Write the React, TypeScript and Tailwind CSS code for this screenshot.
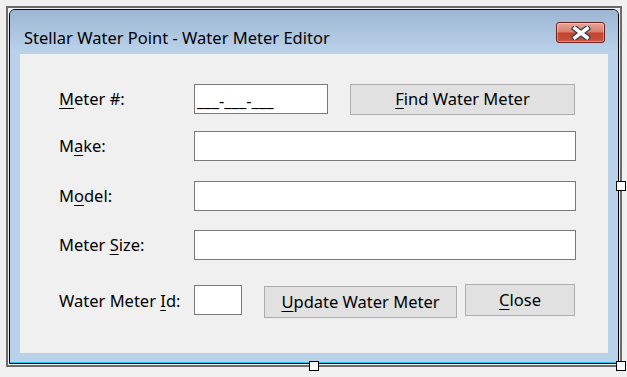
import type { ReactNode } from "react";

const font = { fontFamily: '"Segoe UI", "Noto Sans", sans-serif' };

function Key({ children }: { children: ReactNode }) {
  return <span className="underline underline-offset-[3px] decoration-1">{children}</span>;
}

function Label({ children }: { children: ReactNode }) {
  return <div className="w-[135px] shrink-0 text-[16.5px] leading-[22px] text-black">{children}</div>;
}

function Box({ className }: { className: string }) {
  return <div className={"h-[30px] bg-white border border-[#7a7a7a] " + className} />;
}

function Button({ children, className }: { children: ReactNode; className: string }) {
  return (
    <button className={"flex items-center justify-center bg-[#e1e1e1] border border-[#adadad] text-[16.5px] text-black " + className}>
      {children}
    </button>
  );
}

function Handle({ className }: { className: string }) {
  return <div className={"absolute w-[10px] h-[10px] bg-white border border-black " + className} />;
}

function CloseGlyph() {
  return (
    <svg width="20" height="14" viewBox="0 0 20 14">
      <path d="M4 2.5 L16 11.5 M16 2.5 L4 11.5" stroke="#3c3f52" strokeWidth="6" strokeLinecap="square" />
      <path d="M4 2.5 L16 11.5 M16 2.5 L4 11.5" stroke="#ffffff" strokeWidth="3.6" strokeLinecap="square" />
    </svg>
  );
}

export default function App() {
  return (
    <div className="relative w-[627px] h-[377px] bg-[#f0f0f0] pt-[6px] pl-[6px]" style={font}>
      {/* designer selection frame */}
      <div className="w-[616px] h-[361px] border-2 border-[#6b6b6b] p-[1px]">
        <div className="w-full h-full border border-black rounded-t-[6px] overflow-hidden flex flex-col bg-[#bad1ea]">
          {/* title bar */}
          <div className="h-[44px] shrink-0 flex justify-between px-[13px] bg-gradient-to-b from-[#9cb6d4] to-[#bcd3eb]">
            <span className="mt-[17px] ml-[1px] text-[16.5px] leading-[22px] text-black">
              Stellar Water Point - Water Meter Editor
            </span>
            <div className="mt-[12px] w-[49px] h-[21px] rounded-[3px] border border-[#6e2220] flex items-center justify-center bg-[linear-gradient(to_bottom,#eaa596_0%,#d8806e_48%,#c3432d_52%,#c95540_100%)] shadow-[inset_0_0_0_1px_rgba(255,255,255,0.35)]">
              <CloseGlyph />
            </div>
          </div>
          {/* client area */}
          <div className="flex-1 flex px-[10px] pb-[9px]">
            <div className="flex-1 bg-[#f0f0f0] flex flex-col pl-[39px]">
              <div className="mt-[30px] h-[30px] flex items-center">
                <Label>
                  <Key>M</Key>eter #:
                </Label>
                <div className="w-[134px] h-[30px] bg-white border border-[#7a7a7a] pl-[2px] flex items-end pb-[1px] text-[16.5px] leading-[22px] text-black">
                  ___-___-___
                </div>
                <Button className="ml-[22px] w-[225px] h-[31px]">
                  <Key>F</Key>ind Water Meter
                </Button>
              </div>
              <div className="mt-[17px] h-[30px] flex items-center">
                <Label>
                  M<Key>a</Key>ke:
                </Label>
                <Box className="w-[382px]" />
              </div>
              <div className="mt-[20px] h-[30px] flex items-center">
                <Label>
                  M<Key>o</Key>del:
                </Label>
                <Box className="w-[382px]" />
              </div>
              <div className="mt-[19px] h-[30px] flex items-center">
                <Label>
                  Meter <Key>S</Key>ize:
                </Label>
                <Box className="w-[382px]" />
              </div>
              <div className="mt-[24px] h-[34px] flex items-start">
                <div className="mt-[6px]">
                  <Label>
                    Water Meter <Key>I</Key>d:
                  </Label>
                </div>
                <Box className="mt-[1px] w-[48px]" />
                <Button className="ml-[22px] mt-[2px] w-[193px] h-[32px]">
                  <Key>U</Key>pdate Water Meter
                </Button>
                <Button className="ml-[8px] w-[110px] h-[32px]">
                  <Key>C</Key>lose
                </Button>
              </div>
            </div>
          </div>
          <div className="h-px bg-[#1ec8f0] shrink-0" />
        </div>
      </div>
      <Handle className="left-[616px] top-[181px]" />
      <Handle className="left-[309px] top-[361px]" />
      <Handle className="left-[616px] top-[361px]" />
    </div>
  );
}
